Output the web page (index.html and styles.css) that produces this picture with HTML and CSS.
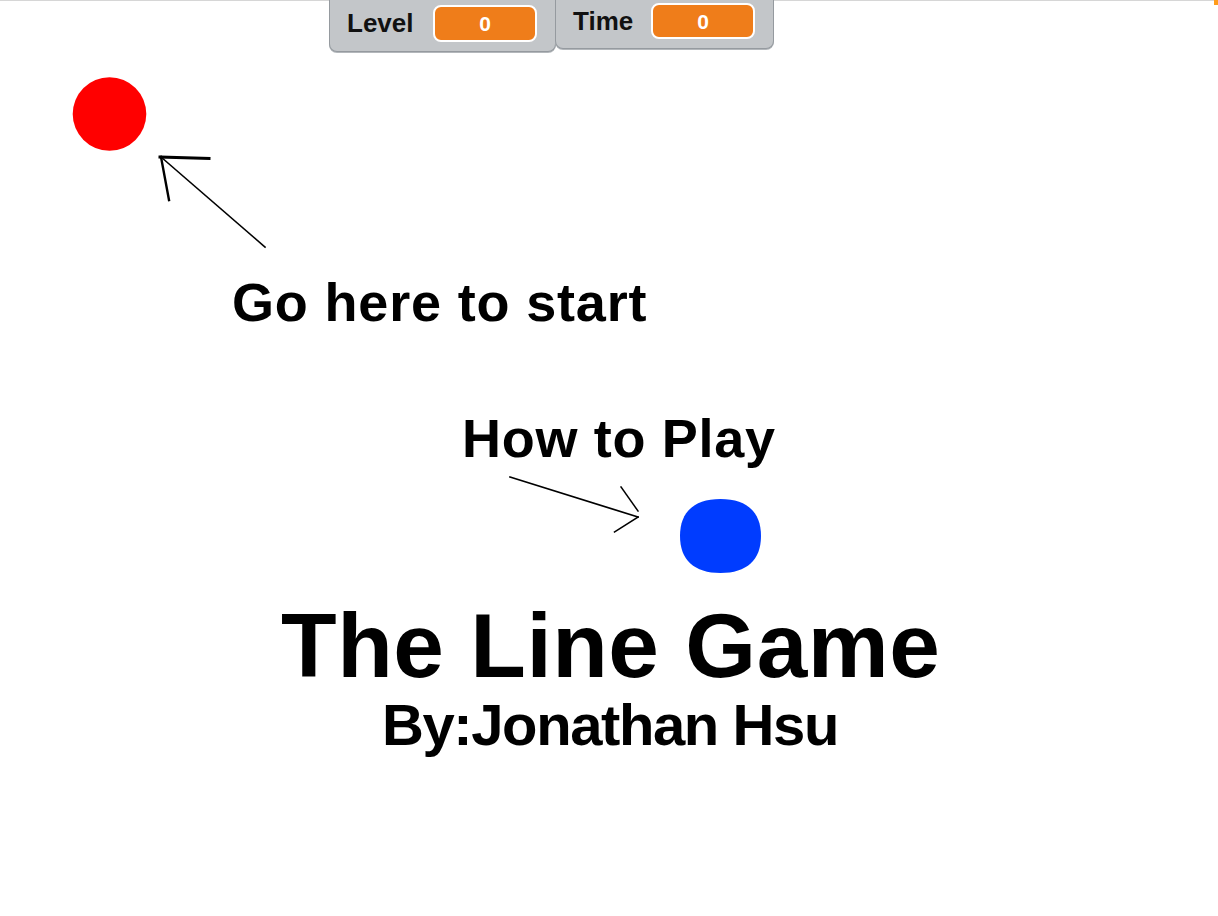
FILE: index.html
```html
<!DOCTYPE html>
<html lang="en">
<head>
<meta charset="utf-8">
<title>The Line Game</title>
<link rel="stylesheet" href="styles.css">
</head>
<body>
<div class="stage">
  <div class="top-line"></div>
  <div class="corner"></div>

  <svg class="drawing" width="1218" height="916" viewBox="0 0 1218 916" aria-hidden="true">
    <circle cx="109.5" cy="114" r="36.8" fill="#ff0000"/>
    <g stroke="#000" stroke-linecap="square" fill="none">
      <line x1="160" y1="157" x2="209" y2="158.5" stroke-width="3"/>
      <line x1="161" y1="157" x2="169" y2="200" stroke-width="2.4"/>
      <line x1="161" y1="157" x2="265" y2="247" stroke-width="1.6"/>
      <line x1="510" y1="477" x2="638" y2="517" stroke-width="1.7"/>
      <line x1="621" y1="487" x2="638" y2="511" stroke-width="1.5"/>
      <line x1="638" y1="517" x2="614.5" y2="532" stroke-width="1.5"/>
    </g>
    <path d="M720.5,499 C746.8,499 761,512 761,536 C761,560 746.8,573 720.5,573 C694.2,573 680,560 680,536 C680,512 694.2,499 720.5,499 Z" fill="#003cff"/>
  </svg>

  <div class="monitor monitor-level">
    <span class="monitor-label">Level</span>
    <span class="monitor-value value-level">0</span>
  </div>
  <div class="monitor monitor-time">
    <span class="monitor-label">Time</span>
    <span class="monitor-value value-time">0</span>
  </div>

  <div class="note note-start">Go here to start</div>
  <div class="note note-how">How to Play</div>
  <h1 class="title">The Line Game</h1>
  <div class="byline">By:Jonathan Hsu</div>
</div>
</body>
</html>
```

FILE: styles.css
```css
html, body {
  margin: 0;
  padding: 0;
  background: #ffffff;
}

body {
  width: 1218px;
  height: 916px;
  overflow: hidden;
  font-family: "Liberation Sans", Arial, Helvetica, sans-serif;
  color: #000;
}

.stage {
  position: relative;
  width: 1218px;
  height: 916px;
  background: #ffffff;
}

.top-line {
  height: 1px;
  background: #d6d6d6;
  width: 1214px;
}

.corner {
  position: absolute;
  top: 0;
  right: 0;
  width: 4px;
  height: 5px;
  background: #ff9c1a;
}

.drawing {
  position: absolute;
  left: 0;
  top: 0;
  display: block;
}

/* Scratch variable monitors */
.monitor {
  position: absolute;
  top: 0;
  box-sizing: border-box;
  display: flex;
  align-items: flex-start;
  justify-content: space-between;
  padding: 0 18px 0 17px;
  background: #c3c6c9;
  border: 1px solid #959a9f;
  border-top: none;
  border-radius: 0 0 8px 8px;
  box-shadow: 0 1px 0 #b3b7bb;
}

.monitor-level {
  left: 329px;
  width: 227px;
  height: 52px;
  padding-top: 5px;
}

.monitor-time {
  left: 555px;
  width: 219px;
  height: 49px;
  padding-top: 3px;
}

.monitor-label {
  font-weight: bold;
  font-size: 26px;
  line-height: 37px;
  color: #111;
}

.monitor-time .monitor-label {
  line-height: 36px;
}

.monitor-value {
  box-sizing: border-box;
  display: flex;
  align-items: center;
  justify-content: center;
  background: #ef7d1a;
  border: 2px solid #ffffff;
  border-radius: 8px;
  color: #ffffff;
  font-weight: bold;
  font-size: 21px;
  line-height: 1;
}

.value-level {
  width: 104px;
  height: 37px;
}

.value-time {
  width: 104px;
  height: 36px;
}

/* drawn stage text */
.note,
.title,
.byline {
  position: absolute;
  margin: 0;
  font-weight: bold;
  line-height: 1;
  white-space: nowrap;
}

.note {
  font-size: 54px;
  letter-spacing: 0.7px;
}

.note-start {
  left: 232px;
  top: 275px;
  letter-spacing: 0.83px;
}

.note-how {
  left: 462px;
  top: 411px;
}

.title {
  left: 281px;
  top: 600px;
  font-size: 91px;
  letter-spacing: 0.55px;
}

.byline {
  left: 382px;
  top: 696px;
  font-size: 58px;
  letter-spacing: -1.4px;
}
```
